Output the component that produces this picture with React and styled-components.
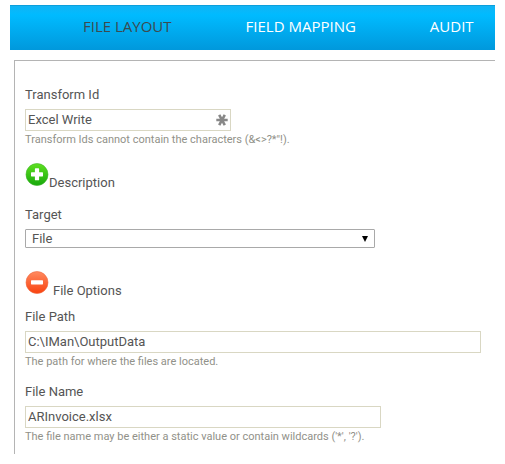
import React, { useId, useState } from 'react';
import styled, { createGlobalStyle } from 'styled-components';

const GlobalStyle = createGlobalStyle`
  * {
    box-sizing: border-box;
  }

  body {
    margin: 0;
    background: #fff;
    color: #555;
    font-family: Roboto, 'Noto Sans', sans-serif;
    font-size: 13px;
    line-height: 20px;
  }
`;

const Page = styled.div`
  padding: 5px 10px 10px;
`;

const NavBar = styled.nav`
  display: flex;
  align-items: center;
  gap: 74px;
  height: 45px;
  padding: 0 0 4px 73px;
  overflow: hidden;
  border-top: 1px solid #0c9fdb;
  background: linear-gradient(#12b4f4, #00bbff 20%, #0098dc);
`;

const NavLink = styled.a`
  color: ${({ $active }) => ($active ? '#3c4a4f' : '#fff')};
  font-family: 'Open Sans', sans-serif;
  font-size: 15px;
  white-space: nowrap;
  text-decoration: none;
`;

const Panel = styled.form`
  margin: 10px 0 0 4px;
  padding: 23px 14px 9px 10px;
  border: 1px solid #b4b4b4;
  border-width: 1px 0 0 1px;
`;

const FieldWrapper = styled.div`
  margin-bottom: 11px;

  &:last-child {
    margin-bottom: 0;
  }
`;

const Label = styled.label`
  display: block;
  padding-top: 1px;
  margin-bottom: 4px;
`;

const InputBox = styled.div`
  display: flex;
  align-items: center;
  width: 100%;
  max-width: ${({ $width }) => $width};
  height: 22px;
  padding: 0 2px;
  border: 1px solid #d9d7c3;
`;

const Input = styled.input`
  flex: 1;
  min-width: 0;
  padding: 0;
  border: none;
  outline: none;
  background: none;
  color: #555;
  font: inherit;
`;

const Help = styled.div`
  padding-top: 1px;
  color: #919189;
  font-size: 11px;
  line-height: 16px;
`;

const SelectWrapper = styled.div`
  display: grid;
  align-items: center;
  max-width: 350px;
  margin-bottom: 19px;

  > * {
    grid-area: 1 / 1;
  }
`;

const Select = styled.select`
  width: 100%;
  height: 19px;
  padding: 0 20px 0 6px;
  appearance: none;
  border: 1px solid #a9a9a9;
  border-radius: 1px;
  background: #fff;
  color: #555;
  font: inherit;
  line-height: 17px;
`;

const SelectArrow = styled.svg`
  justify-self: end;
  margin-right: 7px;
  pointer-events: none;
`;

const ToggleRow = styled.button`
  display: flex;
  align-items: flex-end;
  gap: ${({ $gap }) => $gap};
  height: 30px;
  margin: 0 0 ${({ $space }) => $space};
  padding: 0;
  border: none;
  background: none;
  color: inherit;
  font: inherit;
  cursor: pointer;

  svg {
    align-self: flex-start;
  }
`;

const Section = styled.section`
  padding-top: 4px;
`;

const RequiredIcon = () => (
  <svg width="12" height="12" viewBox="0 0 12 12" stroke="#888" strokeWidth="2.6" aria-hidden="true">
    <path d="M0.3 6H11.7M3.2 0.9L8.8 11.1M8.8 0.9L3.2 11.1" />
  </svg>
);

const ToggleIcon = ({ open }) => {
  const id = useId();
  const [top, bottom, edge] = open ? ['#ff8a60', '#f9420f', '#ee6a42'] : ['#5fe020', '#17a80c', '#3fb52a'];

  return (
    <svg width="24" height="24" viewBox="0 0 24 24" aria-hidden="true">
      <defs>
        <linearGradient id={id} x1="0" y1="0" x2="0" y2="1">
          <stop offset="0" stopColor={top} />
          <stop offset="1" stopColor={bottom} />
        </linearGradient>
      </defs>
      <circle cx="12" cy="11.5" r="11" fill={`url(#${id})`} stroke={edge} strokeWidth="0.6" />
      <rect x="6" y="9.2" width="12" height="4.2" rx="0.6" fill="#fff" />
      {!open && <rect x="9.9" y="5.3" width="4.2" height="12" rx="0.6" fill="#fff" />}
    </svg>
  );
};

const Field = ({ id, label, value, help, width, required }) => (
  <FieldWrapper>
    <Label htmlFor={id}>{label}</Label>
    <InputBox $width={width}>
      <Input id={id} type="text" defaultValue={value} required={required} />
      {required && <RequiredIcon />}
    </InputBox>
    <Help>{help}</Help>
  </FieldWrapper>
);

const App = () => {
  const [showDescription, setShowDescription] = useState(false);
  const [showOptions, setShowOptions] = useState(true);

  return (
    <>
      <GlobalStyle />
      <Page>
        <NavBar>
          <NavLink href="#layout" $active>FILE LAYOUT</NavLink>
          <NavLink href="#mapping">FIELD MAPPING</NavLink>
          <NavLink href="#audit">AUDIT</NavLink>
        </NavBar>
        <Panel>
          <Field
            id="transform-id"
            label="Transform Id"
            value="Excel Write"
            help={'Transform Ids cannot contain the characters (&<>?*"!).'}
            width="206px"
            required
          />
          <Section>
            <ToggleRow
              type="button"
              $gap="0"
              $space="11px"
              aria-expanded={showDescription}
              onClick={() => setShowDescription(!showDescription)}
            >
              <ToggleIcon open={showDescription} />
              Description
            </ToggleRow>
            <Label htmlFor="target">Target</Label>
            <SelectWrapper>
              <Select id="target" defaultValue="File">
                <option>File</option>
              </Select>
              <SelectArrow width="6" height="6" viewBox="0 0 6 6" aria-hidden="true">
                <path d="M0 0H6L3 6Z" />
              </SelectArrow>
            </SelectWrapper>
          </Section>
          <Section>
            <ToggleRow
              type="button"
              $gap="4px"
              $space="5px"
              aria-expanded={showOptions}
              onClick={() => setShowOptions(!showOptions)}
            >
              <ToggleIcon open={showOptions} />
              File Options
            </ToggleRow>
            {showOptions && (
              <>
                <Field
                  id="file-path"
                  label="File Path"
                  value="C:\IMan\OutputData"
                  help="The path for where the files are located."
                  width="456px"
                />
                <Field
                  id="file-name"
                  label="File Name"
                  value="ARInvoice.xlsx"
                  help="The file name may be either a static value or contain wildcards ('*', '?')."
                  width="356px"
                />
              </>
            )}
          </Section>
        </Panel>
      </Page>
    </>
  );
};

export default App;
